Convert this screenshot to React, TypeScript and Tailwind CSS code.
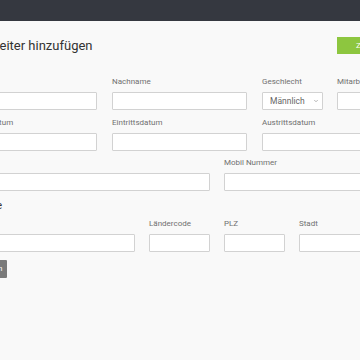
import { ChevronDown } from 'lucide-react';

const font = { fontFamily: 'Roboto, "Liberation Sans", sans-serif' };

function Field({ label, width, children }: { label: string; width: string; children?: React.ReactNode }) {
  return (
    <div className={`${width} shrink-0 flex flex-col`}>
      <label className="text-[8px] leading-[10px] text-[#707070] mb-[5px] whitespace-nowrap">{label}</label>
      {children ?? <input className="h-[18px] w-full bg-white border border-[#d2d2d2] rounded-[1px] outline-none" />}
    </div>
  );
}

export default function App() {
  return (
    <div className="w-[360px] h-[360px] overflow-hidden bg-[#f9f9f9]" style={font}>
      {/* Top navigation bar */}
      <div className="h-[21px] bg-[#353840]"></div>

      {/* Page content (wider than viewport, shifted left) */}
      <div className="ml-[-38px] w-[510px] pt-[16px]">
        {/* Header */}
        <div className="flex items-center justify-between h-[17px]">
          <h1 className="text-[13px] leading-[17px] text-[#333] whitespace-nowrap">Mitarbeiter hinzufügen</h1>
          <button className="h-[17px] w-[135px] bg-[#8dc63f] text-white text-[8px] text-left pl-[19px]">Zurück</button>
        </div>

        {/* Row 1 */}
        <div className="flex mt-[23px]">
          <Field label="Vorname" width="w-[135px]" />
          <div className="w-[15px] shrink-0" />
          <Field label="Nachname" width="w-[135px]" />
          <div className="w-[15px] shrink-0" />
          <Field label="Geschlecht" width="w-[61px]">
            <div className="h-[18px] bg-white border border-[#d2d2d2] rounded-[1px] flex items-center justify-between pl-[7px] pr-[3px]">
              <span className="text-[8.5px] text-[#666]">Männlich</span>
              <ChevronDown size={6} strokeWidth={2.5} className="text-[#888]" />
            </div>
          </Field>
          <div className="w-[14px] shrink-0" />
          <Field label="Mitarbeiternummer" width="w-[135px]" />
        </div>

        {/* Row 2 */}
        <div className="flex gap-[15px] mt-[7.5px]">
          <Field label="Geburtsdatum" width="w-[135px]" />
          <Field label="Eintrittsdatum" width="w-[135px]" />
          <Field label="Austrittsdatum" width="w-[135px]" />
        </div>

        {/* Row 3 */}
        <div className="flex gap-[14px] mt-[7.5px]">
          <Field label="E-Mail" width="w-[248px]" />
          <Field label="Mobil Nummer" width="w-[248px]" />
        </div>

        {/* Address section */}
        <h2 className="text-[11px] leading-[14px] text-[#333] mt-[8px]">Adresse</h2>

        <div className="flex gap-[14px] mt-[6px]">
          <Field label="Straße" width="w-[173px]" />
          <Field label="Ländercode" width="w-[61px]" />
          <Field label="PLZ" width="w-[61px]" />
          <Field label="Stadt" width="w-[173px]" />
        </div>

        <button className="mt-[7.5px] h-[18px] px-[5px] bg-[#7a7a7a] text-white text-[8px] rounded-[1px]">Speichern</button>
      </div>
    </div>
  );
}
